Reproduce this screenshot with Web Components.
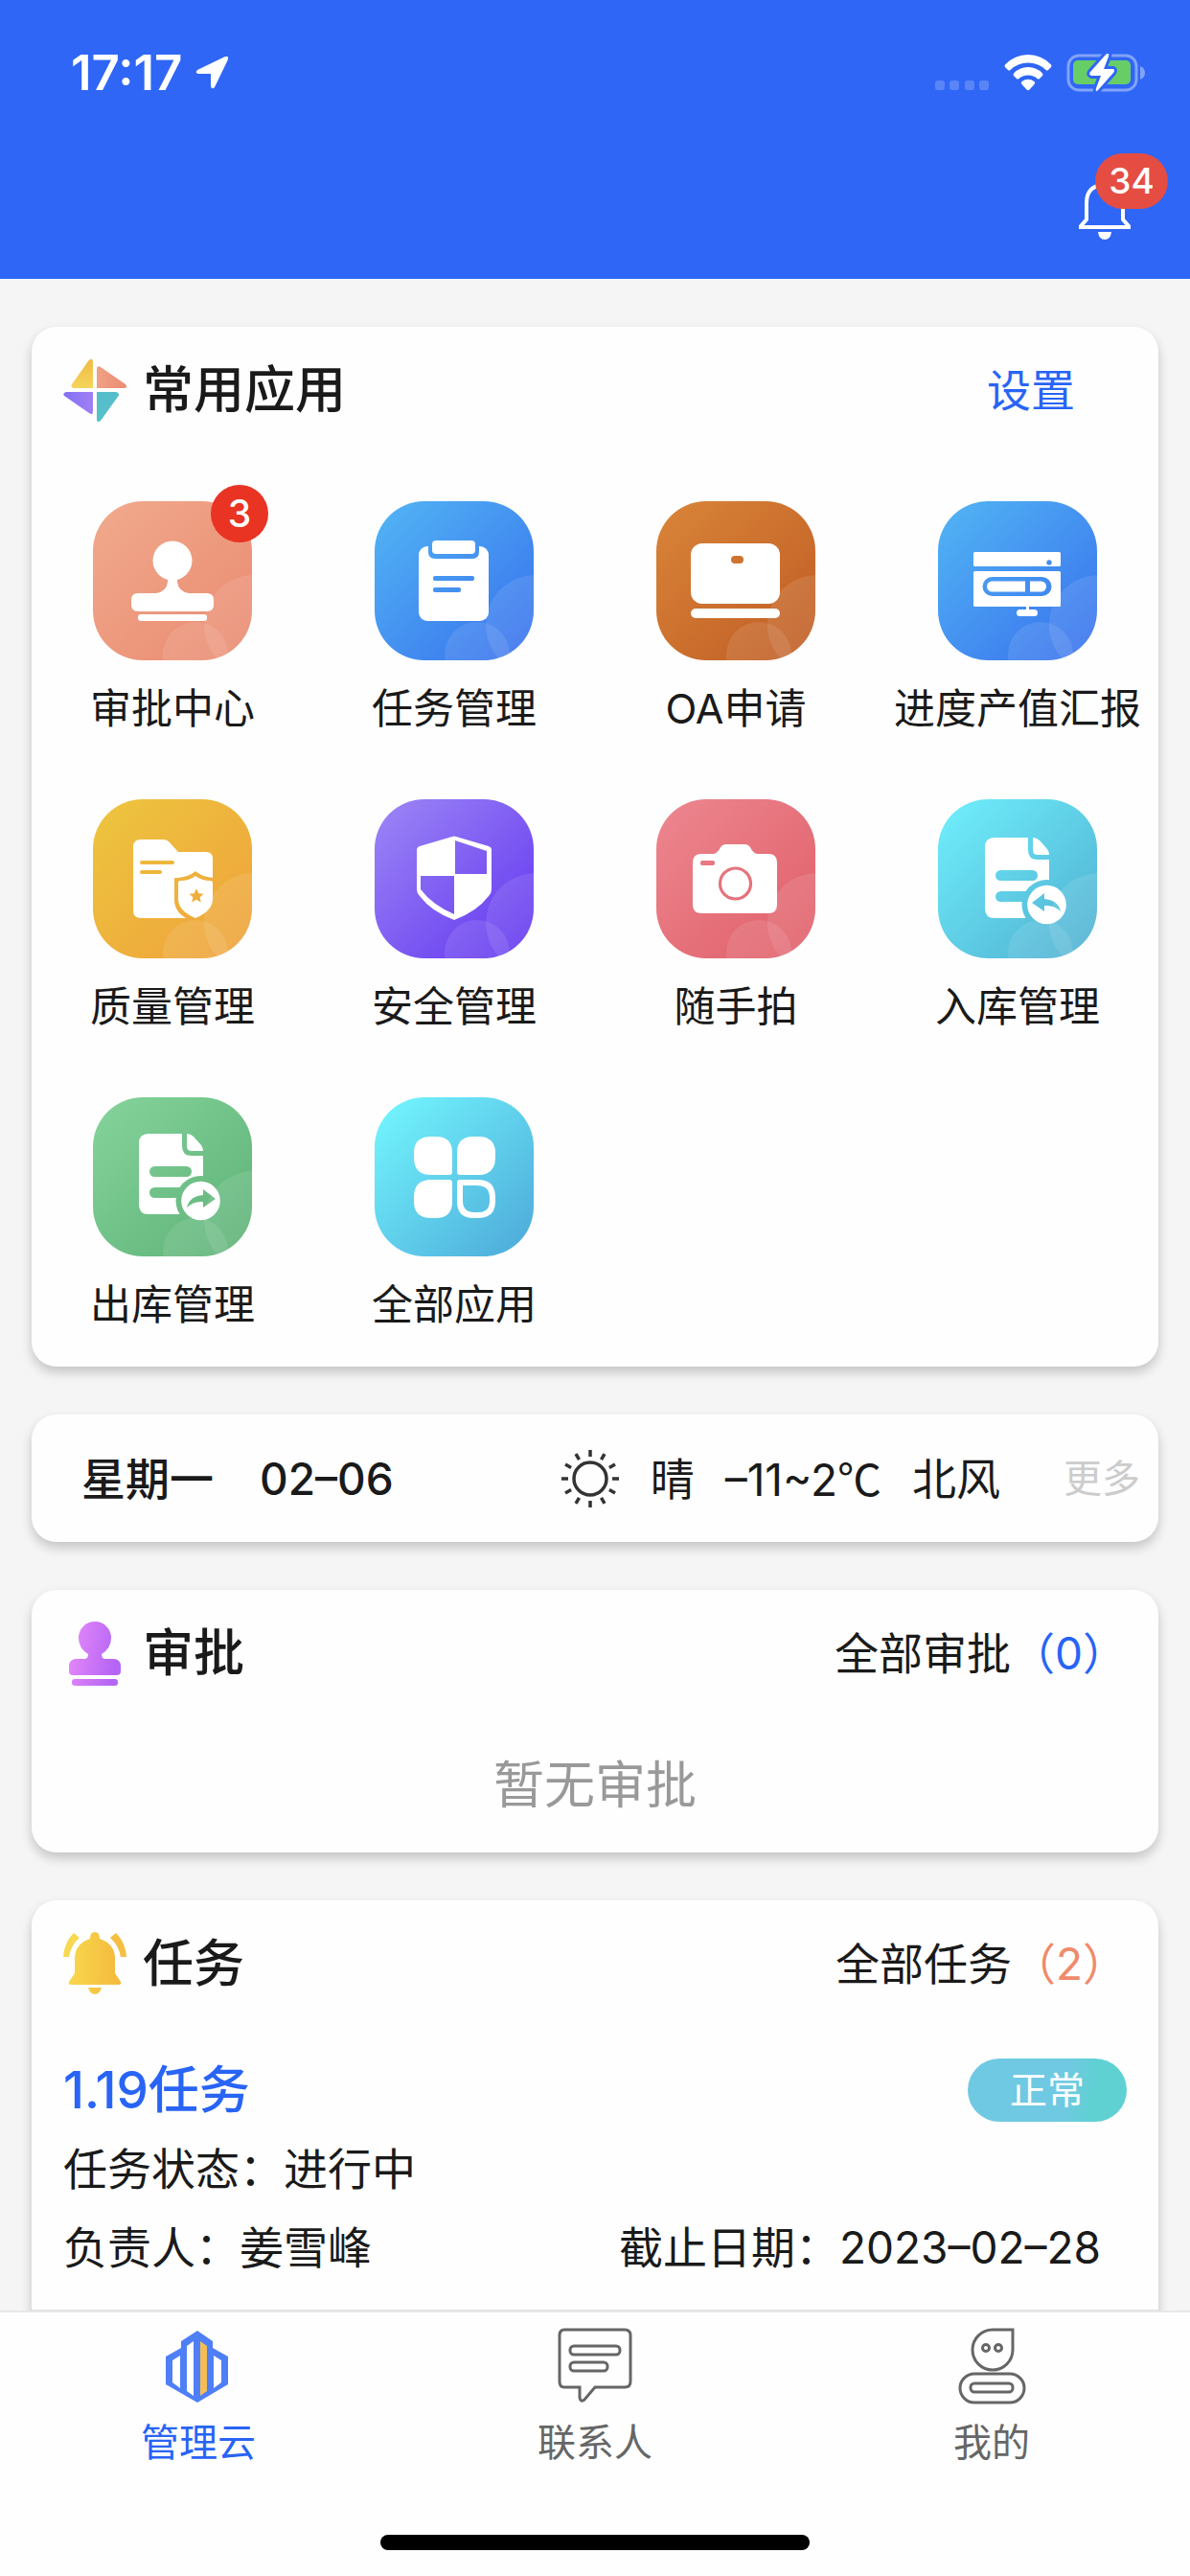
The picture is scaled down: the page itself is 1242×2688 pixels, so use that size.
<!DOCTYPE html>
<html lang="zh-CN">
<head>
<meta charset="UTF-8">
<meta name="viewport" content="width=device-width, initial-scale=1.0">
<title>管理云</title>
<style>
html, body{
    height: 100%;
    margin: 0;
}

body{
    --blue: #2864f5;
    --ink: #1a1a1a;
    display: flex;
    flex-direction: column;
    background-color: #f5f5f5;
    color: var(--ink);
    font-family: Inter, "Noto Sans CJK SC", sans-serif;
    font-size: 46px;
    line-height: 60px;
}

main{
    flex: 1;
    min-height: 0;
    overflow: hidden;
    display: flex;
    flex-direction: column;
    gap: 50px;
    padding: 50px 33px 0;
}

main > *{
    flex-shrink: 0;
}

.tasks{
    padding-bottom: 50px;
}

.unit{
    font-family: "Noto Sans CJK SC", sans-serif;
}
</style>
</head>
<body>

<app-header count="34"></app-header>

<main>
    <ui-card>
        <card-head icon="kite">常用应用<a slot="more" href="#settings" style="padding-right: 54px">设置</a></card-head>
        <app-grid>
            <app-tile icon="stamp" from="#f1aa8d" to="#ea8d73" badge="3">审批中心</app-tile>
            <app-tile icon="clipboard" from="#52b6f4" to="#3a76ee">任务管理</app-tile>
            <app-tile icon="laptop" from="#d98539" to="#c26026">OA申请</app-tile>
            <app-tile icon="progress" from="#52b6f4" to="#3a76ee">进度产值汇报</app-tile>
            <app-tile icon="folder" from="#edc63f" to="#efa43b">质量管理</app-tile>
            <app-tile icon="shield" from="#9d87f6" to="#683df0">安全管理</app-tile>
            <app-tile icon="camera" from="#ed8790" to="#e1626c">随手拍</app-tile>
            <app-tile icon="docin" from="#70f0fd" to="#52b4d4">入库管理</app-tile>
            <app-tile icon="docout" from="#86d49d" to="#60b479">出库管理</app-tile>
            <app-tile icon="petals" from="#74f8ff" to="#50b0dc" plain>全部应用</app-tile>
        </app-grid>
    </ui-card>

    <ui-card>
        <weather-strip>
            <span slot="day">星期一</span>
            <span slot="day">02–06</span>
            <span slot="now">晴</span>
            <span slot="now">–11~2<span class="unit">℃</span></span>
            <span slot="now">北风</span>
        </weather-strip>
    </ui-card>

    <ui-card>
        <card-head icon="seal">审批<a slot="more" href="#approvals">全部审批<span style="color: var(--blue)">（0）</span></a></card-head>
        <empty-note>暂无审批</empty-note>
    </ui-card>

    <ui-card class="tasks">
        <card-head icon="alarm">任务<a slot="more" href="#tasks">全部任务<span style="color: #f08a6c">（2）</span></a></card-head>
        <task-item state="正常">
            1.19任务
            <span slot="status">任务状态：进行中</span>
            <span slot="owner">负责人：姜雪峰</span>
            <span slot="due">截止日期：2023–02–28</span>
        </task-item>
    </ui-card>
</main>

<tab-bar>
    <tab-item icon="cloud" active>管理云</tab-item>
    <tab-item icon="chat">联系人</tab-item>
    <tab-item icon="person">我的</tab-item>
</tab-bar>

<script>
// White part of each tile: used as a mask, black is cut out
const DOC = `
    <path fill="#fff" d="M59 40H94V53Q94 63 104 63H116V124H59Q49 124 49 114V50Q49 40 59 40Z"/>
    <path fill="#fff" d="M99 40Q103 40 106 43L114 52Q116 55 116 58H104Q99 58 99 53Z"/>
    <rect x="60" y="74" width="44" height="11" rx="5.5"/>
    <rect x="60" y="96" width="50" height="11" rx="5.5"/>
    <circle cx="113.500" cy="110" r="26"/>
    <circle cx="113.500" cy="110" r="20.300" fill="#fff"/>`;

const TILE_ICONS = {
    stamp: `
        <circle cx="83" cy="62" r="20.500" fill="#fff"/>
        <path fill="#fff" d="M78 78H88V84Q89 94 100 96H119Q126 96 126 103V108Q126 115 119 115H47Q40 115 40 108V103Q40 96 47 96H66Q77 94 78 84Z"/>
        <rect x="47" y="118" width="72" height="7" rx="3" fill="#fff"/>`,
    clipboard: `
        <rect x="46" y="47" width="73" height="78" rx="9" fill="#fff"/>
        <path d="M56 46H109V53Q109 60 102 60H63Q56 60 56 53Z"/>
        <rect x="60" y="41" width="45" height="14" rx="4" fill="#fff"/>
        <rect x="61" y="78" width="43" height="5" rx="2"/>
        <rect x="61" y="90" width="29" height="5" rx="2"/>`,
    laptop: `
        <rect x="36" y="44" width="93" height="63" rx="12" fill="#fff"/>
        <rect x="78" y="57" width="13" height="8" rx="4"/>
        <rect x="36" y="112" width="93" height="10" rx="5" fill="#fff"/>`,
    progress: `
        <rect x="37" y="53" width="91" height="15" rx="1.500" fill="#fff"/>
        <circle cx="116" cy="64" r="2.700"/>
        <rect x="37" y="73" width="91" height="37" rx="1.500" fill="#fff"/>
        <rect x="46.500" y="79" width="72" height="20" rx="10"/>
        <rect x="51" y="83.500" width="62" height="11" rx="5.500" fill="#fff"/>
        <rect x="91" y="83" width="5" height="12"/>
        <rect x="92" y="109" width="3" height="6" fill="#fff"/>
        <rect x="82" y="113" width="22" height="7" rx="3.500" fill="#fff"/>`,
    folder: `
        <path fill="#fff" d="M50 42H73Q77 42 79 44L89 55H118Q125 55 125 62V124H50Q42 124 42 116V50Q42 42 50 42Z"/>
        <rect x="49" y="64" width="36" height="4" rx="2"/>
        <rect x="49" y="74" width="23" height="4" rx="2"/>
        <path stroke="#000" stroke-width="8" d="M107 80Q114 85 125 86V105Q125 118 107 124Q89 118 89 105V86Q100 85 107 80Z"/>
        <path d="M112 112H126V130H96Z"/>
        <path fill="#fff" d="M107 80Q113 85 123 85Q125 85 125 88V105Q124 117 107 124Q90 117 89 105V88Q89 85 91 85Q101 85 107 80Z"/>
        <path d="M108 93L110.300 98.300L115.500 98.700L111.600 102.300L112.800 107.500L108 104.800L103.200 107.500L104.400 102.300L100.500 98.700L105.700 98.300Z"/>`,
    shield: `
        <path fill="#fff" d="M81 39Q83 38 85 39L119 49Q122 50 122 53V94Q122 98 119 101Q107 117 83 126Q59 117 47 101Q44 98 44 94V53Q44 50 47 49Z"/>
        <path d="M84 43L117 54V78H84Z"/>
        <path d="M48 80H83V120Q60 110 48 94Z"/>`,
    camera: `
        <path fill="#fff" d="M47 57H59Q63 57 66 52Q68 47 73 47H92Q97 47 99 52Q102 57 106 57H117Q126 57 126 66V110Q126 119 117 119H47Q38 119 38 110V66Q38 57 47 57Z"/>
        <circle cx="82.500" cy="88" r="16" stroke="#000" stroke-width="3.200" fill="#fff"/>
        <rect x="46" y="64" width="15" height="5" rx="2"/>`,
    docin: `${DOC}
        <path d="M98 108L111 98V104Q125 105 128 117Q121 110 111 111V117Z"/>`,
    docout: `<g transform="translate(-1 -2)">${DOC}
        <path d="M129 108L116 98V104Q102 105 99 117Q106 110 116 111V117Z"/></g>`,
    petals: `
        <path fill="#fff" d="M59 41H64Q81 41 81 58V78Q81 81 78 81H59Q41 81 41 63V58Q41 41 59 41Z"/>
        <path fill="#fff" d="M103 41H108Q126 41 126 58V63Q126 81 108 81H89Q86 81 86 78V58Q86 41 103 41Z"/>
        <path fill="#fff" d="M59 86H78Q81 86 81 89V109Q81 126 64 126H59Q41 126 41 109V104Q41 86 59 86Z"/>
        <path fill="#fff" d="M89 86H108Q126 86 126 104V109Q126 126 108 126H103Q86 126 86 109V89Q86 86 89 86Z"/>
        <path d="M92 92H107Q120 92 120 105V108Q120 120 108 120H104Q92 120 92 108Z"/>`
};

const HEAD_ICONS = {
    kite: `
        <defs>
            <linearGradient id="a" x1="0" y1="0" x2="0" y2="1"><stop stop-color="#efbb45"/><stop offset="1" stop-color="#f5d55b"/></linearGradient>
            <linearGradient id="b"><stop stop-color="#f0a184"/><stop offset="1" stop-color="#ea8c74"/></linearGradient>
            <linearGradient id="c"><stop stop-color="#8371f6"/><stop offset="1" stop-color="#a07ff5"/></linearGradient>
            <linearGradient id="d" x1="0" y1="0" x2="0" y2="1"><stop stop-color="#56bccb"/><stop offset="1" stop-color="#54c3ca"/></linearGradient>
        </defs>
        <path fill="url(#a)" d="M27 1.500Q31-1 31 4V31H11Q7 30 9 27Z"/>
        <path fill="url(#b)" d="M35 11Q35 7 39 9L65 27Q68 31 63 31H35Z"/>
        <path fill="url(#c)" d="M3 35H31V55Q31 60 27 57L1 39Q-1 36 3 35Z"/>
        <path fill="url(#d)" d="M35 35H55Q60 36 57 40L39 65Q35 68 35 63Z"/>`,
    seal: `
        <defs><linearGradient id="a" gradientUnits="userSpaceOnUse" x1="6" x2="60" y1="0" y2="10"><stop stop-color="#e98bf9"/><stop offset="1" stop-color="#b565f5"/></linearGradient></defs>
        <g fill="url(#a)">
            <path d="M33 0A17 17 0 0 1 50 17Q50 28 40 34Q40 39 44 39H52Q60 39 60 47V52Q60 56 56 56H10Q6 56 6 52V47Q6 39 14 39H22Q26 39 26 34Q16 28 16 17A17 17 0 0 1 33 0Z"/>
            <rect x="9" y="60" width="48" height="7" rx="3"/>
        </g>`,
    alarm: `
        <defs><linearGradient id="a" gradientUnits="userSpaceOnUse" x1="6" x2="60" y1="0" y2="0"><stop stop-color="#f8d74d"/><stop offset="1" stop-color="#f4b93c"/></linearGradient></defs>
        <path fill="url(#a)" d="M33 0Q38 0 38 7Q54 12 54 28V43L60 52Q61 55 58 55H8Q5 55 6 52L12 43V28Q12 12 28 7Q28 0 33 0Z"/>
        <path fill="url(#a)" d="M26 58H40Q38 65 33 65Q28 65 26 58Z"/>
        <path fill="#f8d850" d="M11 1L17 6Q8 14 6 26H0Q1 11 11 1Z"/>
        <path fill="#f4bf43" d="M55 1L49 6Q58 14 60 26H66Q65 11 55 1Z"/>`
};

const TAB_ICONS = {
    cloud: `
        <path fill="#4f7ff7" d="M38 3L54 14V21L70 30V59L38 78L5 59V30L21 21V14Z"/>
        <path fill="#fff" d="M12 34L20 29V63L12 57ZM63 34L55 29V63L63 57ZM27 19L34 14V71L27 66Z"/>
        <path fill="#f5bd55" d="M41 14L48 19V66L41 71Z"/>`,
    chat: `
        <path d="M7 2H70Q76 2 76 8V56Q76 62 70 62H39L28 75Q24 78 23 73V62H7Q2 62 2 56V8Q2 2 7 2Z"/>
        <rect x="13" y="19" width="52" height="9" rx="4"/>
        <rect x="13" y="36" width="39" height="9" rx="4"/>`,
    person: `
        <path d="M61 2V23A21 21 0 1 1 40 2Z"/>
        <circle cx="33" cy="21" r="3.500"/>
        <circle cx="46" cy="21" r="3.500"/>
        <rect x="6" y="48" width="67" height="30" rx="15"/>
        <rect x="17" y="58" width="44" height="9" rx="4"/>`
};

class BaseElement extends HTMLElement{

    constructor(){
        super();
        this.attachShadow({mode: 'open'});
    }

    connectedCallback(){
        this.shadowRoot.innerHTML = this.render();
    }

}

class AppHeader extends BaseElement{
    render(){
        return `
<style>
:host{
    display: block;
    flex-shrink: 0;
    background-color: #2f66f6;
    color: #fff;
}

.status{
    display: flex;
    justify-content: space-between;
    align-items: center;
    height: 112px;
    padding: 20px 46px 0 74px;
}

.side{
    display: flex;
    align-items: center;
    gap: 14px;
}

time{
    font-size: 51px;
    font-weight: 600;
}

.nav{
    display: flex;
    justify-content: flex-end;
    padding: 58px 62px 41px;
}

button{
    position: relative;
    display: flex;
    padding: 0;
    border: 0;
    background: none;
    color: inherit;
    font: inherit;
}

.badge{
    position: absolute;
    left: 17px;
    top: -30px;
    width: 76px;
    border-radius: 29px;
    background-color: #e54d42;
    font-size: 37px;
    font-weight: 500;
    line-height: 58px;
    text-align: center;
}
</style>

<div class="status">
    <div class="side">
        <time>17:17</time>
        <svg width="34" height="34" viewBox="0 0 34 34"><path fill="#fff" d="M31 0Q35-1 34 3L20 32Q17 35 16 31V18H3Q-1 17 2 14Z"/></svg>
    </div>
    <div class="side">
        <svg width="58" height="38" viewBox="0 0 58 38" fill="#fff" opacity=".2"><rect y="27" width="10" height="10" rx="3"/><rect x="15" y="27" width="10" height="10" rx="3"/><rect x="31" y="27" width="10" height="10" rx="3"/><rect x="46" y="27" width="10" height="10" rx="3"/></svg>
        <svg width="50" height="38" viewBox="0 0 50 38" fill="#fff">
            <path d="M1 10.500Q11 0 25 0Q39 0 49 10.500Q50 12 49 13L46 16Q45 17 43.500 16Q36 8.500 25 8.500Q14 8.500 6.500 16Q5 17 4 16L1 13Q0 12 1 10.500Z"/>
            <path d="M10 19.500Q16 13 25 13Q34 13 40 19.500Q41 21 40 22L37 25Q36 26 34.500 25Q31 21.500 25 21.500Q19 21.500 15.500 25Q14 26 13 25L10 22Q9 21 10 19.500Z"/>
            <path d="M18.500 28Q25 23.500 31.500 28Q33 29 31.500 31L26.500 36.500Q25 38 23.500 36.500L18.500 31Q17 29 18.500 28Z"/>
        </svg>
        <svg width="84" height="40" viewBox="-2 0 84 40">
            <rect x="1" y="2" width="71" height="36" rx="11" fill="none" stroke="#fff" stroke-opacity=".4" stroke-width="3"/>
            <path fill="#fff" fill-opacity=".4" d="M76 13Q81 15 81 20Q81 25 76 27Z"/>
            <rect x="6" y="7" width="60" height="25" rx="5" fill="#67ce67"/>
            <path fill="#fff" stroke="#2f66f6" stroke-width="6" paint-order="stroke" stroke-linejoin="round" d="M42 0Q44 0 43 3L38 16H48Q50 17 48 20L32 38Q29 41 30 36L35 23H25Q22 22 24 19L40 1Q41 0 42 0Z"/>
        </svg>
    </div>
</div>
<div class="nav">
    <button aria-label="消息">
        <svg width="54" height="60" viewBox="0 0 54 60"><path fill="none" stroke="#fff" stroke-width="4" d="M27 3Q8 3 8 22V39L2 46V47H52V46L46 39V22Q46 3 27 3Z"/><path fill="#fff" d="M20 52H34Q33 60 27 60Q21 60 20 52Z"/></svg>
        <span class="badge">${this.getAttribute('count')}</span>
    </button>
</div>`;
    }
}

class UiCard extends BaseElement{
    render(){
        return `
<style>
:host{
    display: block;
    border-radius: 26px;
    background-color: #fefefe;
    box-shadow: 0 6px 12px rgba(0, 0, 0, .2);
}
</style>
<slot></slot>`;
    }
}

class CardHead extends BaseElement{
    render(){
        return `
<style>
:host{
    display: flex;
    align-items: center;
    gap: 17px;
    height: 132px;
    padding: 0 33px;
}

h2{
    flex: 1;
    margin: 0;
    font-size: 53px;
    font-weight: 500;
}

::slotted(a){
    color: var(--ink);
    text-decoration: none;
}

::slotted(a[href="#settings"]){
    color: var(--blue);
}
</style>
<svg width="66" height="67" viewBox="0 0 66 67">${HEAD_ICONS[this.getAttribute('icon')]}</svg>
<h2><slot></slot></h2>
<slot name="more"></slot>`;
    }
}

class AppGrid extends BaseElement{
    render(){
        return `
<style>
:host{
    display: grid;
    grid-template-columns: repeat(4, 1fr);
    row-gap: 65px;
    padding: 50px 0 35px;
}
</style>
<slot></slot>`;
    }
}

class AppTile extends BaseElement{
    render(){
        const badge = this.getAttribute('badge');
        const bubbles = this.hasAttribute('plain') ? '' : `
            <g clip-path="url(#box)" fill="#fff" fill-opacity=".1">
                <circle cx="168" cy="129" r="52"/>
                <circle cx="107" cy="160" r="34"/>
            </g>`;
        return `
<style>
:host{
    display: flex;
    justify-content: center;
}

a{
    position: relative;
    display: flex;
    flex-direction: column;
    align-items: center;
    gap: 20px;
    color: inherit;
    font-size: 43px;
    text-decoration: none;
    white-space: nowrap;
}

.badge{
    position: absolute;
    left: calc(50% + 40px);
    top: -17px;
    width: 60px;
    border-radius: 50%;
    background-color: #e93323;
    color: #fff;
    font-size: 39px;
    font-weight: 500;
    line-height: 60px;
    text-align: center;
}
</style>
<a href="#${this.getAttribute('icon')}">
    <svg width="166" height="166" viewBox="0 0 166 166">
        <defs>
            <linearGradient id="bg" x1="0" y1="0" x2=".9" y2=".9"><stop stop-color="${this.getAttribute('from')}"/><stop offset="1" stop-color="${this.getAttribute('to')}"/></linearGradient>
            <clipPath id="box"><rect width="166" height="166" rx="52"/></clipPath>
            <mask id="glyph">${TILE_ICONS[this.getAttribute('icon')]}</mask>
        </defs>
        <rect width="166" height="166" rx="52" fill="url(#bg)"/>
        ${bubbles}
        <rect width="166" height="166" fill="#fff" mask="url(#glyph)"/>
    </svg>
    <slot></slot>
    ${badge ? `<span class="badge">${badge}</span>` : ''}
</a>`;
    }
}

class WeatherStrip extends BaseElement{
    render(){
        // twelve rays round the sun
        let rays = '';
        for(let i = 0; i < 12; i++){
            rays += `<path d="M31 1V8" transform="rotate(${i * 30} 31 31)"/>`;
        }
        return `
<style>
:host{
    display: flex;
    align-items: center;
    justify-content: space-between;
    height: 133px;
    padding: 0 19px 0 52px;
}

.day, .now{
    display: flex;
    align-items: center;
}

.day{
    gap: 48px;
    font-weight: 500;
}

.now{
    gap: 32px;
}

a{
    margin-left: 34px;
    color: #ccc;
    font-size: 40px;
    text-decoration: none;
}
</style>
<div class="day"><slot name="day"></slot></div>
<div class="now">
    <svg width="62" height="62" viewBox="0 0 62 62" fill="none" stroke="#333" stroke-width="3.500"><circle cx="31" cy="31" r="17"/>${rays}</svg>
    <slot name="now"></slot>
    <a href="#weather">更多</a>
</div>`;
    }
}

class EmptyNote extends BaseElement{
    render(){
        return `
<style>
:host{
    display: block;
    padding: 42px 0 40px;
    color: #999;
    font-size: 53px;
    text-align: center;
}
</style>
<slot></slot>`;
    }
}

class TaskItem extends BaseElement{
    render(){
        return `
<style>
:host{
    display: block;
    padding: 33px 33px 24px;
    border-bottom: 2px solid #e2e2e2;
}

.row{
    display: flex;
    align-items: center;
    justify-content: space-between;
    min-height: 82px;
}

.row.top{
    min-height: 66px;
    margin-bottom: 8px;
}

h3{
    margin: 0;
    color: var(--blue);
    font-size: 53px;
    font-weight: 500;
}

.state{
    width: 166px;
    border-radius: 33px;
    background: linear-gradient(100deg, #70c9e2 60%, #5fd1d3 78%);
    color: #fff;
    font-size: 39px;
    line-height: 66px;
    text-align: center;
}

slot[name="due"]{
    display: block;
    padding-right: 27px;
}
</style>
<div class="row top"><h3><slot></slot></h3><span class="state">${this.getAttribute('state')}</span></div>
<div class="row"><slot name="status"></slot></div>
<div class="row"><slot name="owner"></slot><slot name="due"></slot></div>`;
    }
}

class TabBar extends BaseElement{
    render(){
        return `
<style>
:host{
    display: block;
    flex-shrink: 0;
    position: relative;
    border-top: 2px solid #e8e8e8;
    background-color: #fefefe;
}

nav{
    display: grid;
    grid-template-columns: repeat(3, 1fr);
    padding: 16px 0 66px;
}

.home{
    width: 36%;
    height: 16px;
    margin: 0 auto;
    border-radius: 8px;
    background-color: #000;
}

footer{
    padding-bottom: 27px;
}
</style>
<nav><slot></slot></nav>
<footer><div class="home"></div></footer>`;
    }
}

class TabItem extends BaseElement{
    render(){
        return `
<style>
:host{
    display: flex;
    justify-content: center;
    color: #666;
}

:host([active]){
    color: var(--blue);
}

a{
    display: flex;
    flex-direction: column;
    align-items: center;
    gap: 10px;
    color: inherit;
    font-size: 40px;
    text-decoration: none;
}
</style>
<a href="#${this.getAttribute('icon')}">
    <svg width="78" height="80" viewBox="0 0 78 80" fill="none" ${this.hasAttribute('active') ? '' : 'stroke="#666" stroke-width="3"'}>${TAB_ICONS[this.getAttribute('icon')]}</svg>
    <slot></slot>
</a>`;
    }
}

customElements.define('app-header', AppHeader);
customElements.define('ui-card', UiCard);
customElements.define('card-head', CardHead);
customElements.define('app-grid', AppGrid);
customElements.define('app-tile', AppTile);
customElements.define('weather-strip', WeatherStrip);
customElements.define('empty-note', EmptyNote);
customElements.define('task-item', TaskItem);
customElements.define('tab-bar', TabBar);
customElements.define('tab-item', TabItem);
</script>
</body>
</html>
